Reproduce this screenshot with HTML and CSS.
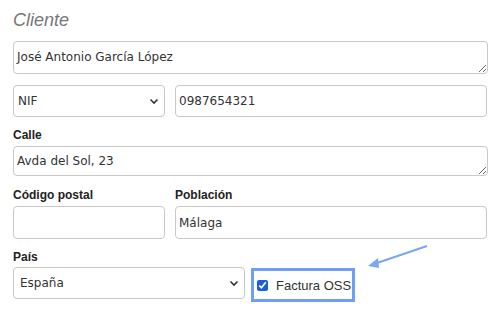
FILE: index.html
```html
<!DOCTYPE html>
<html lang="es">
<head>
<meta charset="utf-8">
<link rel="stylesheet" href="styles.css">
</head>
<body>
<div class="form">
  <h2 class="title">Cliente</h2>
  <textarea class="field ta ta-name">José Antonio García López</textarea>
  <div class="row">
    <div class="sel-wrap">
      <select class="field sel"><option>NIF</option></select>
      <svg class="chev" width="10" height="7" viewBox="0 0 10 7"><path d="M1.5 1.5 L5 5 L8.5 1.5" fill="none" stroke="#333" stroke-width="1.6"/></svg>
    </div>
    <input class="field inp" value="0987654321">
  </div>
  <label class="lbl">Calle</label>
  <textarea class="field ta ta-street">Avda del Sol, 23</textarea>
  <div class="row row-lbl">
    <div class="col">
      <label class="lbl">Código postal</label>
      <input class="field inp" value="">
    </div>
    <div class="col">
      <label class="lbl">Población</label>
      <input class="field inp" value="Málaga">
    </div>
  </div>
  <label class="lbl">País</label>
  <div class="row-last">
    <div class="sel-wrap">
      <select class="field sel sel-country"><option>España</option></select>
      <svg class="chev" width="10" height="7" viewBox="0 0 10 7"><path d="M1.5 1.5 L5 5 L8.5 1.5" fill="none" stroke="#333" stroke-width="1.6"/></svg>
    </div>
    <label class="oss"><input type="checkbox" class="chk" checked><span>Factura OSS</span></label>
    <svg class="arrow" width="70" height="30" viewBox="0 0 70 30"><line x1="61" y1="2" x2="8" y2="20" stroke="#7aa6f6" stroke-width="2"/><polygon points="2,22 12,14 13,24" fill="#7aa6f6"/></svg>
  </div>
</div>
</body>
</html>
```
FILE: styles.css
```css
html, body { margin: 0; padding: 0; background: #fff; }
body { width: 502px; height: 310px; overflow: hidden; }
.form {
  padding: 10px 14px 0 13px;
  font-family: "DejaVu Sans", Verdana, sans-serif;
  color: #333;
}
.title {
  margin: 0 0 11px 0;
  font-family: "Liberation Sans", Arial, sans-serif;
  font-style: italic;
  font-weight: normal;
  font-size: 18px;
  line-height: 20px;
  color: #777;
}
.field {
  box-sizing: border-box;
  border: 1px solid #c8c8c8;
  border-radius: 4px;
  background: #fff;
  font-family: "DejaVu Sans", Verdana, sans-serif;
  font-size: 12px;
  color: #333;
  margin: 0;
  outline: none;
}
.ta {
  display: block;
  width: 475px;
  padding: 7px 3px;
  line-height: 16px;
  resize: vertical;
  overflow: hidden;
}
.ta-name { height: 33px; margin-bottom: 11px; }
.ta-street { height: 30px; padding-top: 6px; margin-bottom: 12px; }
.row {
  display: grid;
  grid-template-columns: 152px 312px;
  column-gap: 10px;
  margin-bottom: 11px;
}
.row-lbl { margin-bottom: 11px; }
.col { display: flex; flex-direction: column; }
.inp {
  height: 33px;
  padding: 0 3px;
  width: 100%;
}
.row .inp { height: 32px; }
.col .inp { height: 33px; }
.sel-wrap { position: relative; }
.sel {
  -webkit-appearance: none;
  appearance: none;
  width: 100%;
  height: 32px;
  padding: 0 4px;
}
.chev { position: absolute; right: 6px; top: 13px; pointer-events: none; }
.lbl {
  display: block;
  font-family: "Liberation Sans", Arial, sans-serif;
  font-weight: bold;
  font-size: 12px;
  line-height: 14px;
  color: #222;
  margin-bottom: 4px;
}
.row-last {
  position: relative;
  display: flex;
  align-items: flex-start;
  gap: 6px;
  margin-top: -1px;
}
.row-last .sel-wrap { width: 232px; }
.sel-country { padding-left: 6px; }
.oss {
  box-sizing: border-box;
  display: flex;
  align-items: center;
  gap: 8px;
  width: 104px;
  height: 34px;
  margin-top: 1px;
  padding-left: 3px;
  border: 3px solid #6e9ef6;
  font-family: "Liberation Sans", Arial, sans-serif;
  font-size: 13px;
  white-space: nowrap;
  color: #333;
}
.chk {
  width: 11px;
  height: 11px;
  margin: 0;
  flex: none;
  accent-color: #1a5fd6;
}
.arrow { position: absolute; left: 353px; top: -23px; }
```
